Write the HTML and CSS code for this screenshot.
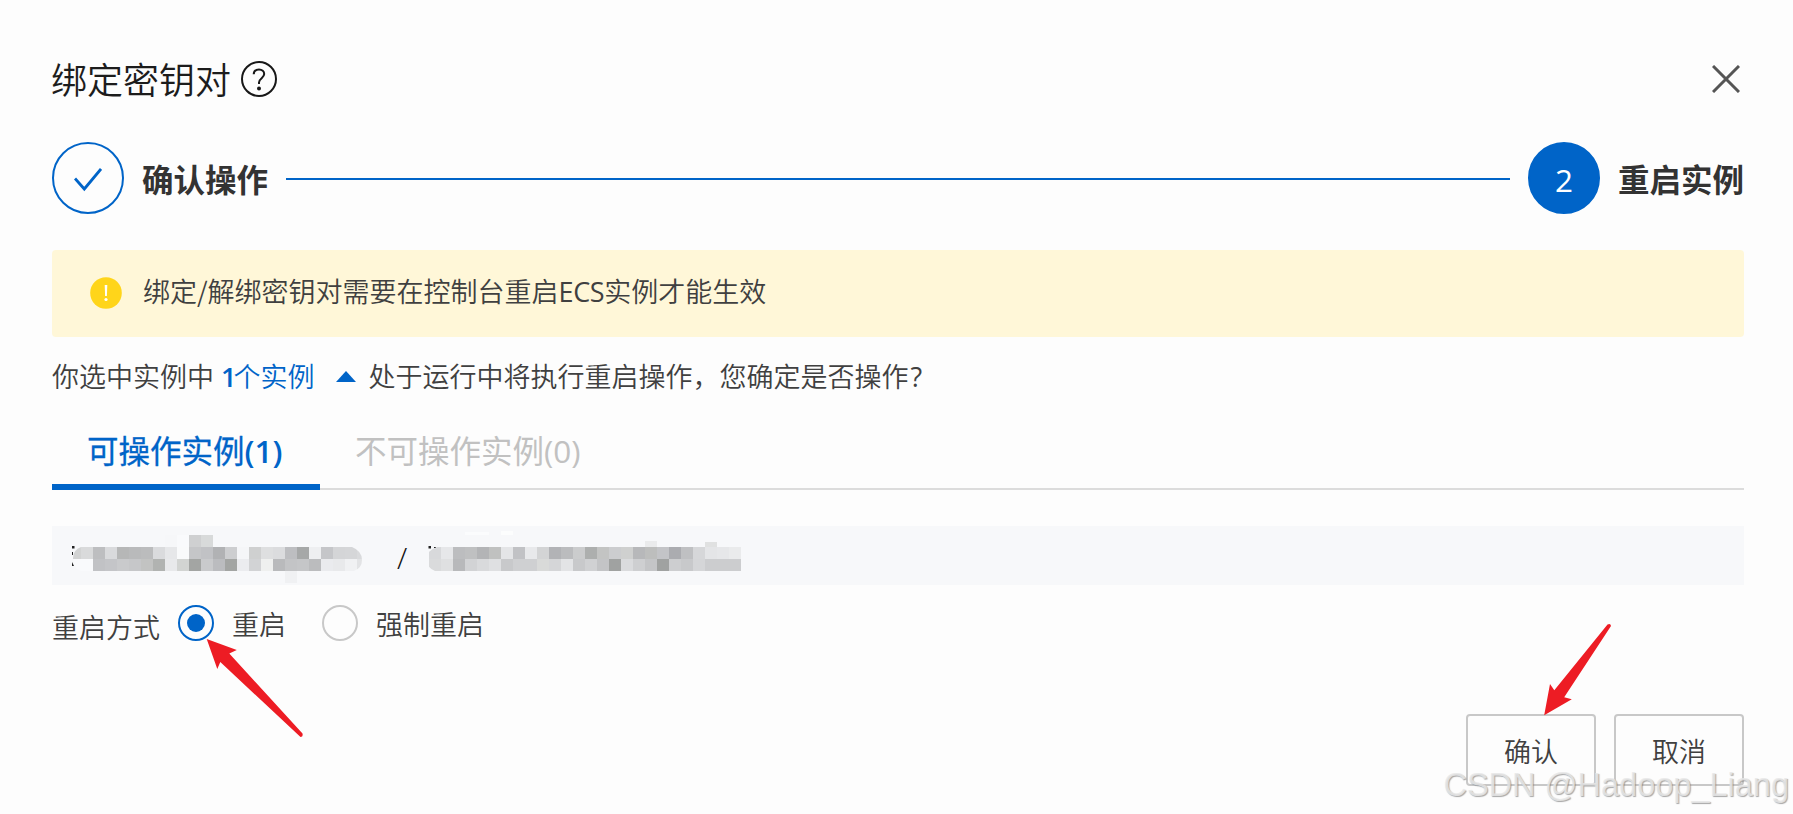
FILE: index.html
```
<!DOCTYPE html>
<html lang="zh-CN">
<head>
    <meta charset="UTF-8">
    <meta name="viewport" content="width=device-width, initial-scale=1.0">
    <title>绑定密钥对</title>
    <link rel="stylesheet" href="styles.css">
</head>
<body>

    <div class="dialog">
        <!-- Header -->
        <div class="dialog-header">
            <h1>绑定密钥对</h1>
            <svg class="help" width="36" height="36" viewBox="0 0 36 36">
                <circle cx="18" cy="18" r="17" />
                <path d="M12.7 13.2C12.9 10.3 15 8.6 18 8.6C21.1 8.6 23.2 10.5 23.2 13.1C23.2 17 18 17.4 18 21.5V23" />
                <circle class="dot" cx="18" cy="27.5" r="2" />
            </svg>
            <svg class="close" width="28" height="28" viewBox="0 0 28 28">
                <path d="M1 1L27 27M27 1L1 27" />
            </svg>
        </div>

        <!-- Steps -->
        <div class="steps">
            <div class="step-circle">
                <svg width="28" height="24" viewBox="0 0 28 24">
                    <path d="M1 10.5L10.3 21L27 1" />
                </svg>
            </div>
            <span class="step-title">确认操作</span>
            <div class="step-line"></div>
            <div class="step-circle current">2</div>
            <span class="step-title">重启实例</span>
        </div>

        <div class="alert">
            <svg width="32" height="32" viewBox="0 0 32 32">
                <circle cx="16" cy="16" r="15.8" fill="#ffd51a" />
                <path d="M14.7 8H17.3L16.9 19H15.1Z" fill="#fff" />
                <circle cx="16" cy="22.5" r="1.6" fill="#fff" />
            </svg>
            <p>绑定/解绑密钥对需要在控制台重启<span class="latin">ECS</span>实例才能生效</p>
        </div>

        <div class="summary">
            <span>你选中实例中</span>
            <a class="count"><b>1</b>个实例</a>
            <span class="caret"></span>
            <span>处于运行中将执行重启操作，您确定是否操作<span class="question">?</span></span>
        </div>

        <!-- Tabs -->
        <div class="tabs">
            <div class="tab active">可操作实例<span class="num">(1)</span></div>
            <div class="tab">不可操作实例<span class="num">(0)</span></div>
        </div>

        <div class="instance">
            <svg id="instance-id" class="mosaic" width="290" height="59" viewBox="72 526 290 59"></svg>
            <span class="slash">/</span>
            <svg id="instance-name" class="mosaic" width="314" height="59" viewBox="427 526 314 59"></svg>
        </div>

        <div class="restart">
            <span class="restart-label">重启方式</span>
            <label class="radio"><i class="radio-dot checked"></i><span>重启</span></label>
            <label class="radio"><i class="radio-dot"></i><span>强制重启</span></label>
        </div>

        <div class="footer">
            <button>确认</button>
            <button>取消</button>
        </div>
    </div>

    <!-- Arrows -->
    <svg class="arrows" width="1793" height="814" viewBox="0 0 1793 814">
        <path d="M206.7 639L236.8 650L229.3 653.5L302.5 733.5Q303.3 737 300.5 737L220.3 662L217.3 669Z" />
        <path d="M1544.2 715.3L1550 684L1554.3 690.3L1607.5 624.6Q1610.5 623 1611 626L1564.2 697.3L1571.8 699.3Z" />
    </svg>
    <div class="watermark">CSDN @Hadoop_Liang</div>

    <script>
        // Each row is [x, y, height, colors...], every cell is 12px wide
        const idRows = [
            [165, 535, 12, 'f6f7f9 f9fafc cfd0d1 d8dada'],
            [69, 547, 12, 'd2d3d3 d9dadb bdbec0 d9dadc b6b7b7 b9babb bbbcbd dadbdd e6e7e9 f9fafb c5c6c8 c1c2c5 b1b2b4 cdced0 f5f6f8 cfd0d0 dedfe0 dbdcde bdbec1 a6a8a8 eeeff1 c5c6c9 d4d5d7 d5d6d8 d9dadc'],
            [69, 559, 12, 'f9fafc f9fafc c1c2c5 c4c5c8 c9cacc c6c7c9 c2c3c2 b1b3b1 e8e9eb d2d4d2 a3a5a3 c9cacc bbbcbf a3a5a3 ebecef d2d3d5 eff0ef b9babc c3c4c6 c5c6c8 bbbcbe eaebee e8e9eb f0f1f3 e2e3e5'],
            [285, 571, 12, 'f0f1f3']
        ];
        const nameRows = [
            [465, 532, 3, 'fbfcfd fbfcfd'],
            [501, 531, 4, 'fcfdfd'],
            [645, 541, 6, 'eaebec'],
            [705, 542, 5, 'e0e1e1'],
            [429, 547, 12, 'd8d9db e6e7e9 bcbdbf bfc0c1 b3b4b6 c0c1c0 e4e5e7 c1c2c5 e8e9eb d3d4d5 b2b3b6 bbbcbe cbcccd adafae c3c4c3 cccdcf cfd0cf b7b8ba bdbebd c3c4c7 abacb0 bfc0c2 d6d7d9 e4e5e7 e6e7e9 eaebec'],
            [429, 559, 12, 'dadbdc dfe0e1 b8b9bb d2d3d5 d9dadc dfe0e2 c8c9cb cfd0d2 cfd0d2 d9dad9 d5d6d8 e3e4e6 c8c9cb d0d1d3 c3c4c6 a0a2a1 dadbdd cecfd1 c4c5c7 a0a2a1 cdced0 c8c9cb d5d6d8 cccdcf cccdcf cccdcf']
        ];

        function drawMosaic(id, rows, clip, extra) {
            let html = '<clipPath id="' + id + '-clip"><path d="' + clip + '"/></clipPath>' + extra;
            html += '<g clip-path="url(#' + id + '-clip)" shape-rendering="crispEdges">';
            rows.forEach(function (row) {
                row[3].split(' ').forEach(function (color, i) {
                    html += '<rect x="' + (row[0] + i * 12) + '" y="' + row[1] + '" width="12" height="' + row[2] + '" fill="#' + color + '"/>';
                });
            });
            document.getElementById(id).innerHTML = html + '</g>';
        }

        drawMosaic('instance-id', idRows,
            'M81 547H165V535H213V547H352Q362 551 362 560Q362 568 354 571H297V583H285V571H81Q73 569 73 558Q73 550 81 547Z',
            '<path d="M72 546h2.5v2.5H72zM72 552h1v3h-1zM72 562l2 4h-2z" fill="#222"/>');
        drawMosaic('instance-name', nameRows,
            'M437 547H465V531H513V547H645V541H657V547H705V542H717V547H741V571H435Q427 568 427 559Q427 550 437 547Z',
            '<path d="M428.5 546h2.5v2.5h-2.5zM434 547h2v1h-2zM728 547h9v1.2h-9z" fill="#222"/>');
    </script>

</body>
</html>
```
FILE: styles.css
```
* {
    box-sizing: border-box;
}

body {
    margin: 0;
    height: 814px;
    position: relative;
    overflow: hidden;
    background-color: #fdfdfd;
    color: #404040;
    font-family: "Noto Sans CJK SC", sans-serif;
    font-size: 27px;
    font-weight: 350;
    line-height: 40px;
}

svg {
    display: block;
    flex: none;
}

.dialog {
    padding: 52px 49px 0 52px;
}

.dialog-header {
    display: flex;
    align-items: center;
    height: 54px;
}

h1 {
    margin: -3px 0 0 -1px;
    font-size: 36px;
    font-weight: 350;
    color: #1c1c1c;
}

.help {
    margin-left: 10px;
    fill: none;
    stroke: #181818;
    stroke-width: 2;
}

.help .dot {
    fill: #181818;
    stroke: none;
}

.close {
    margin: 0 4px 0 auto;
    fill: none;
    stroke: #555;
    stroke-width: 3;
}

.steps {
    display: flex;
    align-items: center;
    margin-top: 36px;
    height: 72px;
}

.step-circle {
    display: flex;
    flex: none;
    align-items: center;
    justify-content: center;
    width: 72px;
    height: 72px;
    border: 2px solid #0064c8;
    border-radius: 50%;
}

.step-circle svg {
    margin-top: 4px;
    fill: none;
    stroke: #0064c8;
    stroke-width: 2.8;
}

.step-circle.current {
    padding-top: 3px;
    background-color: #0064c8;
    color: #fff;
    font-family: "Open Sans", sans-serif;
    font-size: 31.5px;
    font-weight: 400;
}

.step-title {
    margin-left: 18px;
    color: #333;
    font-size: 31.5px;
    font-weight: 700;
    white-space: nowrap;
}

.step-line {
    flex: 1;
    height: 2px;
    margin: 2px 18px 0;
    background-color: #0064c8;
}

.alert {
    display: flex;
    margin-top: 36px;
    padding: 27px 38px;
    height: 87px;
    border-radius: 4px;
    background-color: #fff7d8;
}

.alert p {
    margin: -6px 0 0 21px;
}

.latin {
    font-family: "Open Sans", sans-serif;
    font-weight: 400;
    letter-spacing: -0.4px;
}

.summary {
    display: flex;
    align-items: center;
    height: 40px;
    margin-top: 19px;
}

.count {
    margin-left: 7px;
    color: #0064c8;
}

.count b {
    font-family: "Open Sans", sans-serif;
    font-weight: 600;
    letter-spacing: -3px;
}

.caret {
    margin: 0 12px 0 22px;
    border: 10px solid transparent;
    border-top: 0;
    border-bottom: 11px solid #0064c8;
}

.question {
    margin-left: 2px;
    font-family: "Open Sans", sans-serif;
    font-weight: 400;
}

.tabs {
    display: flex;
    height: 73px;
    margin-top: 21px;
    border-bottom: 2px solid #dcdcdc;
    font-size: 31.5px;
}

.tab {
    height: 73px;
    padding: 12px 37px 0 35px;
    color: #c1c1c1;
    font-weight: 400;
}

.tab.active {
    width: 268px;
    border-bottom: 6px solid #0064c8;
    color: #0064c8;
    font-weight: 400;
    -webkit-text-stroke: 0.3px #0064c8;
}

.num {
    font-family: "Open Sans", sans-serif;
}

.active .num {
    font-weight: 600;
    -webkit-text-stroke: 0;
}

.instance {
    display: flex;
    height: 59px;
    margin-top: 36px;
    padding-left: 20px;
    background-color: #f7f8fa;
}

.slash {
    width: 65px;
    padding: 12px 0 0 35px;
    color: #111;
    font-family: "Open Sans", sans-serif;
    font-size: 30px;
    font-weight: 300;
}

.restart {
    display: flex;
    align-items: center;
    height: 36px;
    margin-top: 20px;
}

.restart-label {
    margin-right: 18px;
    padding-top: 8px;
}

.radio {
    display: flex;
    align-items: center;
    margin-right: 36px;
}

.radio span {
    padding-top: 2px;
}

.radio-dot {
    width: 36px;
    height: 36px;
    margin-right: 18px;
    border: 2px solid #c8c8c8;
    border-radius: 50%;
}

.radio-dot.checked {
    padding: 7px;
    border-color: #0064c8;
    background: #0064c8 content-box;
    background-clip: content-box;
}

.footer {
    display: flex;
    justify-content: flex-end;
    gap: 18px;
    margin-top: 73px;
}

button {
    width: 130px;
    height: 72px;
    padding: 1px 0 0;
    border: 2px solid #c8c8c8;
    border-radius: 4px;
    background-color: transparent;
    color: #404040;
    font: inherit;
}

.arrows {
    position: absolute;
    top: 0;
    left: 0;
    fill: #ed1c24;
}

.watermark {
    position: absolute;
    right: 4px;
    bottom: 9px;
    color: rgba(232, 232, 232, 0.85);
    font-family: "Liberation Sans", sans-serif;
    font-size: 32.5px;
    font-weight: 400;
    text-shadow: 1px 1px 1px rgba(110, 110, 110, 0.6);
}
```
